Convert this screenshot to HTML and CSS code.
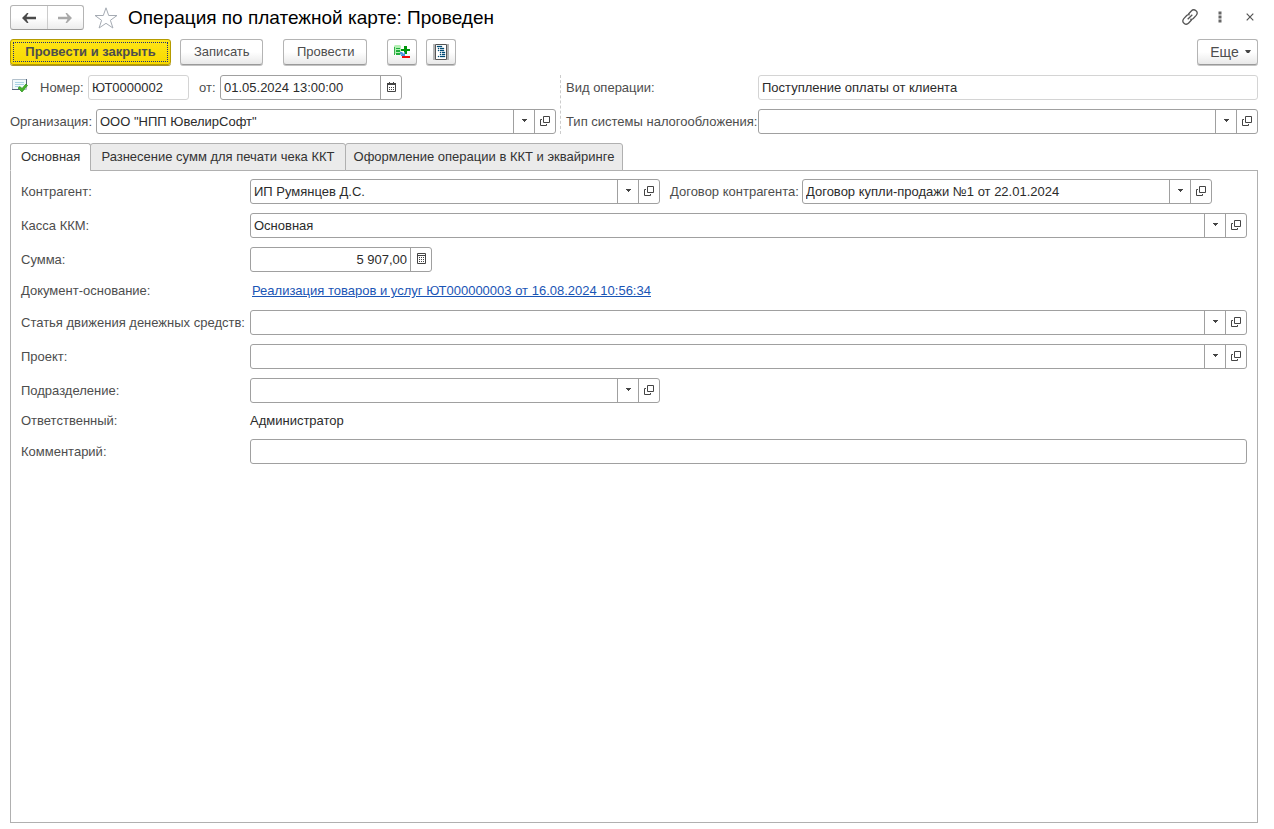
FILE: index.html
```html
<!DOCTYPE html>
<html lang="ru">
<head>
<meta charset="utf-8">
<meta name="viewport" content="width=device-width, initial-scale=1">
<title>Операция по платежной карте: Проведен</title>
<link rel="stylesheet" href="styles.css">
</head>
<body>
<svg class="sprite" aria-hidden="true">
  <symbol id="i-down" viewBox="0 0 5 3"><path d="M0 0h5v1H4v1H3v1H2V2H1V1H0z" fill="#444"/></symbol>
  <symbol id="i-open" viewBox="0 0 10 10"><path d="M3.500.500h6v6h-6zM2 3.500H.5v6h6V8" fill="none" stroke="#444"/></symbol>
</svg>
<main class="page">
  <header class="titlebar">
    <div class="history">
      <button type="button" class="history-btn" aria-label="Назад"><svg width="14" height="10" viewBox="0 0 14 10"><path d="M0 5l5-5h1.500L4.500 3.800H14v2.400H4.500L6.500 10H5z" fill="#4a4a4a"/></svg></button>
      <button type="button" class="history-btn" aria-label="Вперед"><svg width="14" height="10" viewBox="0 0 14 10"><path d="M14 5L9 0H7.500l2 3.800H0v2.400h9.500l-2 3.800H9z" fill="#a9a9a9"/></svg></button>
    </div>
    <button type="button" class="bare star" aria-label="В избранное"><svg width="24" height="22" viewBox="0 0 24 22"><path d="M12 .8l2.700 7.700h8.300l-6.600 4.800 2.500 7.700L12 16.300 5.100 21l2.500-7.700L1 8.500h8.300z" fill="#fff" stroke="#a5abb3"/></svg></button>
    <h1 class="title">Операция по платежной карте: Проведен</h1>
    <div class="window-tools">
      <button type="button" class="bare" aria-label="Получить ссылку"><svg width="16" height="16" viewBox="0 0 16 16" fill="none" stroke="#555" stroke-width="1.300"><path d="M6.300 5.300l3-3.300c1.400-1.500 3.200-1.500 4.700-.2s1.500 3 .2 4.600L11.300 9.500c-.9.900-2 1.100-3 .7M9.700 10.700l-3 3.300c-1.400 1.500-3.200 1.500-4.700.2s-1.500-3-.2-4.600L4.700 6.500c.9-.9 2-1.100 3-.7M5.700 10.300l4.600-4.600"/></svg></button>
      <button type="button" class="bare" aria-label="Меню"><svg width="4" height="12" viewBox="0 0 4 12" fill="#666"><path d="M.5.500h3v3h-3zM.5 4.500h3v3h-3zM.5 8.500h3v3h-3z"/></svg></button>
      <button type="button" class="bare close" aria-label="Закрыть"><svg width="8" height="8" viewBox="0 0 8 8"><path d="M.7.700l6.600 6.600M7.300.7L.7 7.300" stroke="#555" stroke-width="1.200"/></svg></button>
    </div>
  </header>

  <div class="toolbar">
    <button type="button" class="btn btn-primary">Провести и закрыть</button>
    <button type="button" class="btn btn-save">Записать</button>
    <button type="button" class="btn btn-post">Провести</button>
    <button type="button" class="btn btn-icon" aria-label="Движения документа"><svg width="16" height="16" viewBox="0 0 16 16"><path d="M1 1h5l1 1v9H2v-1H0V2z" fill="#b4f0b4"/><path d="M0 3h1v8H0z" fill="#37b04c"/><path d="M2 4h4v1H2zM2 6h4v2H2zM2 9h4v2H2z" fill="#1fae3c"/><path d="M10 2h3v3h3v2h-3v3h-3V7H7V5h3z" fill="#00960b"/><path d="M6 8h2l2 2V8h1v4H7v-1h1L6 10z" fill="#4c94dd"/><path d="M8 12h8v2H8z" fill="#f20a0a"/></svg></button>
    <button type="button" class="btn btn-icon" aria-label="Отчет"><svg width="16" height="16" viewBox="0 0 16 16"><path d="M0 0h2v16H0zM14 0h2v16h-2z" fill="#b5b5b5"/><path d="M2.500.500h11v15h-11z" fill="#fff" stroke="#555"/><path d="M4 2h5v1H4zM5 4h1v1H5zM7 4h4v1H7zM5 6h1v1H5zM7 6h4v1H7zM7 8h1v1H7zM9 8h3v1H9zM7 10h1v1H7zM9 10h3v1H9zM5 12h1v1H5zM7 12h5v1H7z" fill="#004a75" stroke="#004a75" stroke-width=".3"/></svg></button>
    <button type="button" class="btn btn-more">Еще <svg width="6" height="4" viewBox="0 0 6 4"><path d="M0 0h6L4 3H2z" fill="#444"/></svg></button>
  </div>

  <section class="head-fields">
    <div class="head-left">
      <div class="row">
        <svg class="posted" width="16" height="14" viewBox="0 0 16 14"><path d="M.5.500h14v10H.5z" fill="#f2fafd" stroke="#b3c1cc"/><path d="M14.500 0v7M0 10.500h7" stroke="#55677c"/><path d="M3 3.500h9M3 5.500h9M3 7.500h4" stroke="#a9d3e4"/><path d="M6 9l2-1.500 2 2L14 5l1.500 1.500L10 13z" fill="#45b52b" stroke="#27891a" stroke-width=".7"/></svg>
        <label class="label-number" for="number">Номер:</label>
        <div class="field field-number readonly"><input id="number" value="ЮТ0000002" readonly></div>
        <label class="label-date" for="date">от:</label>
        <div class="field field-short"><input id="date" value="01.05.2024 13:00:00"><button type="button" aria-label="Календарь"><svg width="9" height="10" viewBox="0 0 9 10"><path d="M.5 1.500h8v8h-8z" fill="none" stroke="#444"/><path d="M0 1h9v2H0zM2 0h1v1H2zM6 0h1v1H6z" fill="#444"/><path d="M2 5.500h5M2 7.500h5" stroke="#444" stroke-dasharray="1 1"/></svg></button></div>
      </div>
      <div class="row">
        <label class="label-org" for="org">Организация:</label>
        <div class="field"><input id="org" value="ООО &quot;НПП ЮвелирСофт&quot;"><button type="button" aria-label="Выбрать"><svg width="5" height="3"><use href="#i-down"/></svg></button><button type="button" aria-label="Открыть"><svg width="10" height="10"><use href="#i-open"/></svg></button></div>
      </div>
    </div>
    <div class="head-right">
      <div class="row">
        <label class="label-kind" for="kind">Вид операции:</label>
        <div class="field readonly"><input id="kind" value="Поступление оплаты от клиента" readonly></div>
      </div>
      <div class="row">
        <label class="label-kind" for="tax">Тип системы налогообложения:</label>
        <div class="field"><input id="tax"><button type="button" aria-label="Выбрать"><svg width="5" height="3"><use href="#i-down"/></svg></button><button type="button" aria-label="Открыть"><svg width="10" height="10"><use href="#i-open"/></svg></button></div>
      </div>
    </div>
  </section>

  <div class="tabs" role="tablist">
    <button type="button" class="tab active" role="tab" aria-selected="true" aria-controls="panel">Основная</button>
    <button type="button" class="tab" role="tab" aria-selected="false">Разнесение сумм для печати чека ККТ</button>
    <button type="button" class="tab tab-last" role="tab" aria-selected="false">Оформление операции в ККТ и эквайринге</button>
  </div>

  <section class="panel" id="panel" role="tabpanel">
    <div class="row">
      <label class="label" for="partner">Контрагент:</label>
      <div class="field field-half"><input id="partner" value="ИП Румянцев Д.С."><button type="button" aria-label="Выбрать"><svg width="5" height="3"><use href="#i-down"/></svg></button><button type="button" aria-label="Открыть"><svg width="10" height="10"><use href="#i-open"/></svg></button></div>
      <label class="label-contract" for="contract">Договор контрагента:</label>
      <div class="field field-half"><input id="contract" value="Договор купли-продажи №1 от 22.01.2024"><button type="button" aria-label="Выбрать"><svg width="5" height="3"><use href="#i-down"/></svg></button><button type="button" aria-label="Открыть"><svg width="10" height="10"><use href="#i-open"/></svg></button></div>
    </div>
    <div class="row">
      <label class="label" for="cash">Касса ККМ:</label>
      <div class="field"><input id="cash" value="Основная"><button type="button" aria-label="Выбрать"><svg width="5" height="3"><use href="#i-down"/></svg></button><button type="button" aria-label="Открыть"><svg width="10" height="10"><use href="#i-open"/></svg></button></div>
    </div>
    <div class="row">
      <label class="label" for="sum">Сумма:</label>
      <div class="field field-short"><input id="sum" class="numeric" value="5 907,00"><button type="button" aria-label="Калькулятор"><svg width="9" height="11" viewBox="0 0 9 11"><path d="M.5.500h8v10h-8zM0 2.500h9" fill="none" stroke="#444"/><path d="M2 4.500h5M2 6.500h5M2 8.500h5" stroke="#444" stroke-dasharray="1 1"/></svg></button></div>
    </div>
    <div class="row row-link">
      <span class="label">Документ-основание:</span>
      <a class="doc-link" href="#">Реализация товаров и услуг ЮТ000000003 от 16.08.2024 10:56:34</a>
    </div>
    <div class="row">
      <label class="label" for="flow">Статья движения денежных средств:</label>
      <div class="field"><input id="flow"><button type="button" aria-label="Выбрать"><svg width="5" height="3"><use href="#i-down"/></svg></button><button type="button" aria-label="Открыть"><svg width="10" height="10"><use href="#i-open"/></svg></button></div>
    </div>
    <div class="row">
      <label class="label" for="project">Проект:</label>
      <div class="field"><input id="project"><button type="button" aria-label="Выбрать"><svg width="5" height="3"><use href="#i-down"/></svg></button><button type="button" aria-label="Открыть"><svg width="10" height="10"><use href="#i-open"/></svg></button></div>
    </div>
    <div class="row">
      <label class="label" for="dept">Подразделение:</label>
      <div class="field field-half"><input id="dept"><button type="button" aria-label="Выбрать"><svg width="5" height="3"><use href="#i-down"/></svg></button><button type="button" aria-label="Открыть"><svg width="10" height="10"><use href="#i-open"/></svg></button></div>
    </div>
    <div class="row row-value">
      <span class="label">Ответственный:</span>
      <span class="value">Администратор</span>
    </div>
    <div class="row">
      <label class="label" for="comment">Комментарий:</label>
      <div class="field"><input id="comment"></div>
    </div>
  </section>
</main>
</body>
</html>
```
FILE: styles.css
```css
* { box-sizing: border-box; }
body {
  margin: 0;
  background: #fff;
  color: #4d4d4d;
  font: 13px/16px "Liberation Sans", Arial, sans-serif;
}
button, input { font: inherit; color: inherit; }
button { margin: 0; padding: 0; cursor: pointer; }
svg { display: block; flex: none; }
.sprite { position: absolute; width: 0; height: 0; }
.page {
  display: flex;
  flex-direction: column;
  min-height: 100vh;
  padding: 5px 16px 6px 10px;
}

.titlebar { display: flex; align-items: center; height: 25px; }
.history {
  display: flex;
  width: 74px;
  height: 25px;
  border: 1px solid #b4b4b4;
  border-bottom-color: #9a9a9a;
  border-radius: 3px;
  background: linear-gradient(#fff 50%, #ececec);
}
.history-btn {
  flex: 1;
  display: flex;
  align-items: center;
  justify-content: center;
  border: 0;
  background: none;
}
.history-btn + .history-btn { border-left: 1px solid #ccc; }
.bare { border: 0; background: none; }
.star { margin-left: 10px; }
.title {
  margin: 0 0 0 10px;
  color: #000;
  font-size: 19px;
  font-weight: 400;
  line-height: 24px;
}
.window-tools {
  display: flex;
  align-items: center;
  gap: 20px;
  margin-left: auto;
  padding: 0 4px 2px 0;
}
.close { margin-left: 4px; }

.toolbar { display: flex; align-items: center; margin-top: 9px; }
.btn {
  height: 26px;
  padding: 0 13px;
  border: 1px solid #b4b4b4;
  border-bottom-color: #9a9a9a;
  border-radius: 3px;
  background: linear-gradient(#fff 50%, #e9e9e9);
  box-shadow: 0 1px 0 #c4c4c4;
}
.btn-primary {
  width: 161px;
  border-color: #b59b00;
  background: linear-gradient(#ffe617, #f7d800);
  box-shadow: 0 1px 0 #a8922a;
  outline: 1px dotted #1f2f7a;
  outline-offset: -4px;
  font-weight: 700;
}
.btn-save { width: 83px; margin-left: 9px; }
.btn-post { width: 84px; margin-left: 20px; }
.btn-icon {
  display: flex;
  align-items: center;
  justify-content: center;
  width: 30px;
  margin-left: 9px;
  padding: 0;
}
.btn-post + .btn-icon { margin-left: 20px; }
.btn-more {
  display: flex;
  align-items: center;
  justify-content: center;
  gap: 6px;
  width: 61px;
  margin-left: auto;
  padding: 0 0 0 6px;
  font-size: 14px;
}

.head-fields {
  display: grid;
  grid-template-columns: 546fr 698fr;
  gap: 4px;
  margin-top: 10px;
}
.head-left, .head-right { display: flex; flex-direction: column; gap: 9px; }
.head-right { padding-left: 5px; border-left: 1px dashed #ccc; }
.row { display: flex; align-items: center; white-space: nowrap; }
.posted { margin: 0 12px 3px 2px; }
.label-number { width: 48px; }
.label-date { width: 31px; padding-left: 10px; }
.label-org { width: 86px; }
.label-kind { width: 192px; }
.label { flex: none; width: 229px; }
.label-contract { width: 142px; padding-left: 10px; }

.field {
  display: flex;
  flex: 1;
  min-width: 0;
  height: 25px;
  border: 1px solid #a0a0a0;
  border-radius: 3px;
  background: #fff;
  color: #2b2b2b;
}
.readonly { border-color: #d4d4d4; }
.field-number { flex: 0 1 101px; }
.field-short { flex: 0 1 182px; }
.field-half { flex: 0 1 410px; }
.field input {
  flex: 1;
  min-width: 0;
  padding: 0 3px;
  border: 0;
  outline: 0;
  background: none;
}
.field .numeric { text-align: right; }
.field button {
  display: flex;
  flex: none;
  align-items: center;
  justify-content: center;
  width: 21px;
  padding-bottom: 2px;
  border: 0;
  border-left: 1px solid #a0a0a0;
  background: none;
}

.tabs { position: relative; z-index: 1; display: flex; margin-top: 9px; }
.tab {
  height: 28px;
  padding: 0 10px;
  margin-left: -1px;
  border: 1px solid #b0b0b0;
  border-radius: 3px 3px 0 0;
  background: #ebebeb;
  color: #333;
}
.tab.active { margin-left: 0; border-bottom-color: #fff; background: #fff; }
.tab-last { padding: 0 8px; }
.panel {
  display: flex;
  flex: 1;
  flex-direction: column;
  gap: 9px;
  margin-top: -1px;
  padding: 8px 10px;
  border: 1px solid #b0b0b0;
}
.row-link { height: 20px; }
.row-value { height: 18px; }
.doc-link { margin-left: 2px; color: #1a55b5; }
.value { color: #2b2b2b; }
```
